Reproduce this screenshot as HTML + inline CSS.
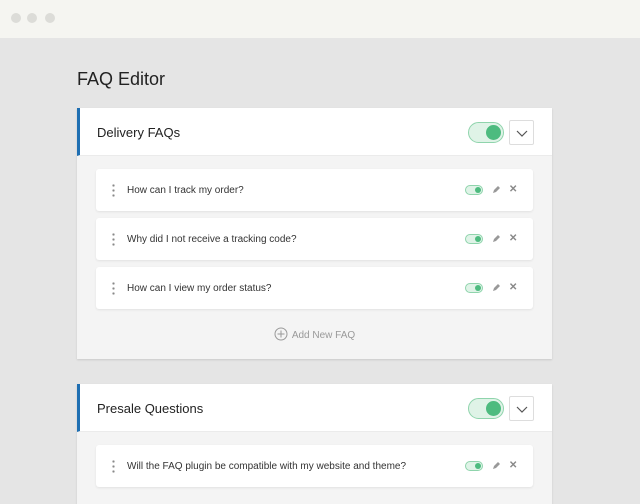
<!DOCTYPE html>
<html><head><style>
*{margin:0;padding:0;box-sizing:border-box}
body{width:640px;height:477px;overflow:hidden;background:#e5e5e5;font-family:"Liberation Sans",sans-serif;position:relative}
.top{position:absolute;left:0;top:0;width:640px;height:38px;background:#f5f5f1}
.dot{position:absolute;top:13px;width:10px;height:10px;border-radius:50%;background:#dcdcd8}
h1{position:absolute;left:77px;top:69px;font-size:18px;font-weight:normal;color:#222}
.card{position:absolute;left:77px;width:475px;background:#f4f4f4;box-shadow:0 1px 2px rgba(0,0,0,.12)}
.hd{height:48px;background:#fff;border-left:3px solid #1f6fb2;position:relative;border-bottom:1px solid #ebebeb}
.hd span{position:absolute;left:17px;top:17px;font-size:13px;color:#222}
.tg{position:absolute;left:388px;top:14px;width:36px;height:21px;border-radius:11px;background:#dff3e7;border:1px solid #8fd4ac}
.tg:after{content:"";position:absolute;right:2px;top:2px;width:15px;height:15px;border-radius:50%;background:#4dbb7f}
.cv{position:absolute;left:429px;top:12px;width:25px;height:25px;border:1px solid #ddd;border-radius:2px;background:#fff}
.it{position:absolute;left:19px;width:437px;height:42px;background:#fff;border-radius:3px;box-shadow:0 1px 2px rgba(0,0,0,.08)}
.it .d{position:absolute;left:16px;top:14px;width:3px;height:14px;background:radial-gradient(circle,#888 1px,transparent 1.3px) 0 0/3px 5px}
.it .t{position:absolute;left:31px;top:16px;font-size:10px;color:#333}
.st{position:absolute;left:369px;top:16px;width:18px;height:10px;border-radius:5px;background:#dff3e7;border:1px solid #8fd4ac}
.st:after{content:"";position:absolute;right:1px;top:1px;width:6px;height:6px;border-radius:50%;background:#4dbb7f}
.pc{position:absolute;left:395px;top:16px}
.x{position:absolute;left:413px;top:15px;font-size:10px;color:#888;font-weight:bold}
.add{position:absolute;left:0;width:475px;text-align:center;font-size:10px;color:#999}
</style></head><body>
<div class="top"><div class="dot" style="left:11px"></div><div class="dot" style="left:27px"></div><div class="dot" style="left:45px"></div></div>
<h1>FAQ Editor</h1>
<div class="card" style="top:108px;height:251px">
<div class="hd"><span>Delivery FAQs</span><div class="tg"></div><div class="cv"><svg width="25" height="25"><path d="M7 10l5 5 5-5" stroke="#555" fill="none" stroke-width="1.2"/></svg></div></div>
<div class="it" style="top:61px"><div class="d"></div><div class="t">How can I track my order?</div><div class="st"></div><svg class="pc" width="10" height="10"><path d="M2 8l1-3 4-4 2 2-4 4z" fill="#999"/></svg><div class="x">✕</div></div>
<div class="it" style="top:110px"><div class="d"></div><div class="t">Why did I not receive a tracking code?</div><div class="st"></div><svg class="pc" width="10" height="10"><path d="M2 8l1-3 4-4 2 2-4 4z" fill="#999"/></svg><div class="x">✕</div></div>
<div class="it" style="top:159px"><div class="d"></div><div class="t">How can I view my order status?</div><div class="st"></div><svg class="pc" width="10" height="10"><path d="M2 8l1-3 4-4 2 2-4 4z" fill="#999"/></svg><div class="x">✕</div></div>
<div class="add" style="top:219px"><svg width="14" height="14" style="vertical-align:-3px;margin-right:4px"><circle cx="7" cy="7" r="6" fill="none" stroke="#999"/><path d="M7 3.5v7M3.5 7h7" stroke="#999"/></svg>Add New FAQ</div>
</div>
<div class="card" style="top:384px;height:120px">
<div class="hd"><span>Presale Questions</span><div class="tg"></div><div class="cv"><svg width="25" height="25"><path d="M7 10l5 5 5-5" stroke="#555" fill="none" stroke-width="1.2"/></svg></div></div>
<div class="it" style="top:61px"><div class="d"></div><div class="t">Will the FAQ plugin be compatible with my website and theme?</div><div class="st"></div><svg class="pc" width="10" height="10"><path d="M2 8l1-3 4-4 2 2-4 4z" fill="#999"/></svg><div class="x">✕</div></div>
</div>
</body></html>
